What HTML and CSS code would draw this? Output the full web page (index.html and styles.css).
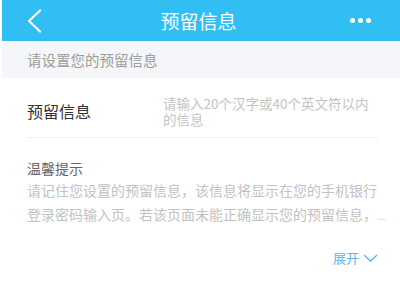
FILE: index.html
```html
<!DOCTYPE html>
<html lang="zh-CN">
<head>
  <meta charset="UTF-8">
  <title>预留信息</title>
  <link rel="stylesheet" href="styles.css">
</head>
<body>

  <div class="page">
    <header class="topbar">
      <span class="back">
        <svg width="16" height="24" viewBox="0 0 16 24"><path d="M14 1.5 L3 12 L14 22.5" fill="none" stroke="#fff" stroke-width="2.2" stroke-linecap="round" stroke-linejoin="round"/></svg>
      </span>
      <h1>预留信息</h1>
      <span class="more">
        <i></i><i></i><i></i>
      </span>
    </header>

    <div class="notice">请设置您的预留信息</div>

    <div class="field">
      <label>预留信息</label>
      <div class="placeholder">请输入20个汉字或40个英文符以内的信息</div>
    </div>

    <div class="tips">
      <h3>温馨提示</h3>
      <p>请记住您设置的预留信息，该信息将显示在您的手机银行登录密码输入页。若该页面未能正确显示您的预留信息，<span class="dots">...</span></p>
      <div class="expand">
        <span>展开</span>
        <svg width="15" height="8" viewBox="0 0 15 8"><path d="M1 1 L7.5 7 L14 1" fill="none" stroke="#5ab4f2" stroke-width="1.3"/></svg>
      </div>
    </div>
  </div>

</body>
</html>
```

FILE: styles.css
```css
body {
  margin: 0;
  background: #fff;
  font-family: "Noto Sans CJK SC", "Noto Sans", sans-serif;
}

.page {
  margin-left: 2px;
}

.topbar {
  background: #30bef3;
  height: 41px;
  display: flex;
  align-items: center;
  justify-content: space-between;
  padding: 0 29px 0 24px;
}

.topbar h1 {
  margin: 0;
  color: #fff;
  font-size: 19px;
  font-weight: normal;
}

.back {
  display: flex;
  width: 40px;
}

.more {
  display: flex;
  gap: 3px;
  width: 40px;
  justify-content: flex-end;
}

.more i {
  width: 5px;
  height: 5px;
  border-radius: 50%;
  background: #fff;
}

.notice {
  background: #f4f6f9;
  height: 37px;
  line-height: 37px;
  padding-left: 25px;
  font-size: 14.5px;
  color: #9d9d9d;
}

.field {
  display: flex;
  align-items: center;
  margin: 0 22px 0 25px;
  padding: 17px 0 10px;
  border-bottom: 1px solid #f0f0f0;
}

.field label {
  width: 136px;
  font-size: 16px;
  color: #333;
}

.placeholder {
  flex: 1;
  font-size: 13.5px;
  line-height: 16px;
  color: #c4c4c4;
}

.tips {
  padding: 20px 20px 0 25px;
}

.tips h3 {
  margin: 0;
  font-size: 14px;
  font-weight: normal;
  line-height: 20px;
  color: #666;
}

.tips p {
  margin: 0 -8px 0 0;
  font-size: 14px;
  line-height: 24px;
  color: #c2c2c2;
}

.tips .dots {
  font-size: 10px;
}

.expand {
  margin: 20px 2px 0 0;
  display: flex;
  align-items: center;
  justify-content: flex-end;
  gap: 4px;
  font-size: 13px;
  line-height: 20px;
  color: #5ab4f2;
}

.expand svg {
  display: block;
}
```
